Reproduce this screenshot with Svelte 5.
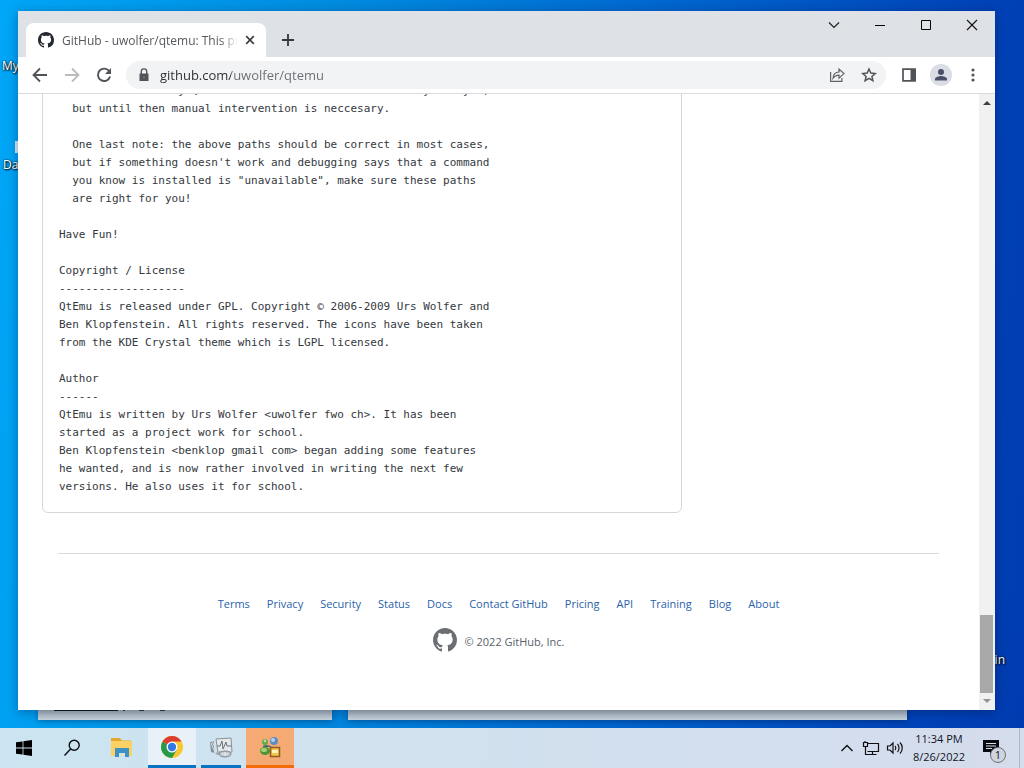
<script lang="ts">
    type Link = {
        label: string;
        href: string;
    };

    const readme = `  If you know where these programs are, set the paths to each
  of it. Eventually QtEmu will do all this automatically for you,
  but until then manual intervention is neccesary.

  One last note: the above paths should be correct in most cases,
  but if something doesn't work and debugging says that a command
  you know is installed is "unavailable", make sure these paths
  are right for you!

Have Fun!

Copyright / License
-------------------
QtEmu is released under GPL. Copyright © 2006-2009 Urs Wolfer and
Ben Klopfenstein. All rights reserved. The icons have been taken
from the KDE Crystal theme which is LGPL licensed.

Author
------
QtEmu is written by Urs Wolfer <uwolfer fwo ch>. It has been
started as a project work for school.
Ben Klopfenstein <benklop gmail com> began adding some features
he wanted, and is now rather involved in writing the next few
versions. He also uses it for school.`;

    const links: Link[] = [
        { label: "Terms", href: "#terms" },
        { label: "Privacy", href: "#privacy" },
        { label: "Security", href: "#security" },
        { label: "Status", href: "#status" },
        { label: "Docs", href: "#docs" },
        { label: "Contact GitHub", href: "#contact" },
        { label: "Pricing", href: "#pricing" },
        { label: "API", href: "#api" },
        { label: "Training", href: "#training" },
        { label: "Blog", href: "#blog" },
        { label: "About", href: "#about" },
    ];

    let url = $state("github.com/uwolfer/qtemu");
</script>

{#snippet mark(size: number)}
    <svg width={size} height={size} viewBox="0 0 16 16" fill="currentColor" aria-hidden="true">
        <path d="M8 0C3.58 0 0 3.58 0 8c0 3.54 2.29 6.53 5.47 7.59.4.07.55-.17.55-.38 0-.19-.01-.82-.01-1.49-2.01.37-2.53-.49-2.69-.94-.09-.23-.48-.94-.82-1.13-.28-.15-.68-.52-.01-.53.63-.01 1.08.58 1.23.82.72 1.21 1.87.87 2.33.66.07-.52.28-.87.51-1.07-1.78-.2-3.64-.89-3.64-3.95 0-.87.31-1.59.82-2.15-.08-.2-.36-1.02.08-2.12 0 0 .67-.21 2.2.82.64-.18 1.32-.27 2-.27s1.36.09 2 .27c1.53-1.04 2.2-.82 2.2-.82.44 1.1.16 1.92.08 2.12.51.56.82 1.27.82 2.15 0 3.07-1.87 3.75-3.65 3.95.29.25.54.73.54 1.48 0 1.07-.01 1.93-.01 2.2 0 .21.15.46.55.38A8.01 8.01 0 0 0 16 8c0-4.42-3.58-8-8-8z" />
    </svg>
{/snippet}

<div class="screen">
    <div class="desktop">
        <span class="shortcut my">My</span>
        <span class="file"></span>
        <span class="shortcut data">Dat</span>
        <span class="shortcut bin">in</span>

        <div class="behind first">
            <svg width="112" height="3" viewBox="0 0 112 3" aria-hidden="true">
                <path d="M0 0h64v1H0z" fill="#0c1c24" />
                <path d="M69 0h2v1h-2zM85 0h5v1h-5zM106 0h5v1h-5z" fill="#28404a" />
            </svg>
        </div>
        <div class="behind second"></div>

        <section class="window">
            <header class="tabs">
                <div class="tab">
                    <span class="favicon">{@render mark(16)}</span>
                    <span class="tab-title">GitHub - uwolfer/qtemu: This project</span>
                    <button aria-label="Close tab">
                        <svg width="16" height="16" viewBox="0 0 16 16">
                            <path d="M4.2 4.2l7.6 7.6M11.8 4.2l-7.6 7.6" stroke="#3c4043" stroke-width="1.7" />
                        </svg>
                    </button>
                </div>
                <button class="new-tab" aria-label="New tab">
                    <svg width="16" height="16" viewBox="0 0 16 16">
                        <path d="M8 2v12M2 8h12" stroke="#33373a" stroke-width="1.8" />
                    </svg>
                </button>
                <div class="controls">
                    <button aria-label="Search tabs">
                        <svg width="12" height="12" viewBox="0 0 12 12">
                            <path d="M1 3.5l5 5 5-5" fill="none" stroke="#222" stroke-width="1.2" />
                        </svg>
                    </button>
                    <button aria-label="Minimize">
                        <svg width="12" height="12" viewBox="0 0 12 12">
                            <path d="M1 6.5h10" stroke="#000" />
                        </svg>
                    </button>
                    <button aria-label="Maximize">
                        <svg width="12" height="12" viewBox="0 0 12 12">
                            <path d="M1.5 1.5h9v9h-9z" fill="none" stroke="#000" />
                        </svg>
                    </button>
                    <button aria-label="Close">
                        <svg width="12" height="12" viewBox="0 0 12 12">
                            <path d="M1 1l10 10M11 1L1 11" stroke="#111" stroke-width="1.1" />
                        </svg>
                    </button>
                </div>
            </header>

            <nav class="toolbar">
                <button aria-label="Back">
                    <svg width="18" height="18" viewBox="0 0 18 18" fill="none" stroke="#505458" stroke-width="1.8">
                        <path d="M16 9H3M9 2.5L2.5 9 9 15.5" />
                    </svg>
                </button>
                <button aria-label="Forward">
                    <svg width="18" height="18" viewBox="0 0 18 18" fill="none" stroke="#babcbe" stroke-width="1.8">
                        <path d="M2 9h13M9 2.5L15.5 9 9 15.5" />
                    </svg>
                </button>
                <button aria-label="Reload">
                    <svg width="18" height="18" viewBox="0 0 18 18" fill="none" stroke="#505458" stroke-width="1.9">
                        <path d="M14.4 5.5A6.2 6.2 0 1 0 15.1 10.5" />
                        <path d="M16 2v6h-6z" fill="#505458" stroke="none" />
                    </svg>
                </button>
                <div class="omnibox">
                    <svg width="16" height="16" viewBox="0 0 16 16" aria-hidden="true">
                        <path d="M3.5 6.5h9V14h-9z" fill="#505458" />
                        <path d="M5.3 7V4.6a2.7 2.7 0 0 1 5.4 0V7" fill="none" stroke="#505458" stroke-width="1.4" />
                        <circle cx="8" cy="10.2" r="1" fill="#777b7f" />
                    </svg>
                    <input type="text" aria-label="Address" bind:value={url} />
                    <button aria-label="Share this page">
                        <svg width="16" height="16" viewBox="0 0 16 16" fill="none" stroke="#5f6368" stroke-width="1.2">
                            <path d="M1.6 5v9.4h11.3V11" />
                            <path d="M4 11.2c.3-3.7 2.3-6 6-6.2V2l5 4.6-5 4.5V8.2C7.2 8.3 5.4 9.2 4 11.2z" />
                        </svg>
                    </button>
                    <button aria-label="Bookmark this tab">
                        <svg width="16" height="16" viewBox="0 0 16 16" fill="none" stroke="#505458" stroke-width="1.5">
                            <path d="M8 2l1.8 4.1 4.4.4-3.3 2.9 1 4.3L8 11.4l-3.9 2.3 1-4.3-3.3-2.9 4.4-.4z" />
                        </svg>
                    </button>
                </div>
                <button aria-label="Side panel">
                    <svg width="16" height="16" viewBox="0 0 16 16">
                        <path d="M2 2.2h12v11.6H2z" fill="none" stroke="#505458" stroke-width="1.7" />
                        <path d="M9.5 2H15v12H9.5z" fill="#505458" />
                    </svg>
                </button>
                <button aria-label="Profile">
                    <svg width="22" height="22" viewBox="0 0 22 22">
                        <circle cx="11" cy="11" r="11" fill="#dadce6" />
                        <circle cx="11" cy="8" r="3" fill="#4b5068" />
                        <path d="M5 16.5V15c0-2 4-3 6-3s6 1 6 3v1.5z" fill="#4b5068" />
                    </svg>
                </button>
                <button aria-label="Menu">
                    <svg width="16" height="16" viewBox="0 0 16 16" fill="#505458">
                        <circle cx="8" cy="3" r="1.6" />
                        <circle cx="8" cy="8" r="1.6" />
                        <circle cx="8" cy="13" r="1.6" />
                    </svg>
                </button>
            </nav>

            <div class="viewport">
                <!-- scrolled to the end, so the content sticks to the bottom edge -->
                <main class="page">
                    <article class="readme">
                        <pre>{readme}</pre>
                    </article>
                    <footer>
                        <ul>
                            {#each links as link}
                                <li><a href={link.href}>{link.label}</a></li>
                            {/each}
                        </ul>
                        <div class="copyright">
                            {@render mark(24)}
                            <span>© 2022 GitHub, Inc.</span>
                        </div>
                    </footer>
                </main>
                <div class="scrollbar">
                    <svg width="16" height="17" viewBox="0 0 16 17" aria-hidden="true">
                        <path d="M4 11h8L8 7z" fill="#404040" />
                    </svg>
                    <div class="track"><div class="thumb"></div></div>
                    <svg width="16" height="17" viewBox="0 0 16 17" aria-hidden="true">
                        <path d="M4 6h8l-4 4z" fill="#939393" />
                    </svg>
                </div>
            </div>
        </section>
    </div>

    <div class="taskbar">
        <button aria-label="Start">
            <svg width="16" height="16" viewBox="0 0 16 16">
                <path d="M0 2.3l6.6-.9v6.2H0zM7.4 1.3L16 0v7.6H7.4zM0 8.4h6.6v6.2L0 13.7zM7.4 8.4H16V16l-8.6-1.3z" />
            </svg>
        </button>
        <button aria-label="Search">
            <svg width="18" height="18" viewBox="0 0 18 18" fill="none" stroke="#0a0e12" stroke-width="1.4">
                <circle cx="11.2" cy="6.3" r="5" />
                <path d="M7.6 9.9L1.5 16.5" />
            </svg>
        </button>
        <button class="app" aria-label="File Explorer">
            <svg width="24" height="24" viewBox="0 0 24 24">
                <path d="M2 3h9l2 2.5h9V18H2z" fill="#e5a82e" />
                <path d="M2 6h21v15H2z" fill="#fcd164" />
                <path d="M6 13h14v9h-4v-4h-6v4H6z" fill="#3d91c7" />
                <path d="M10 18h6v3h-6z" fill="#d8e4d2" />
            </svg>
        </button>
        <button class="app active" aria-label="Google Chrome">
            <svg width="24" height="24" viewBox="0 0 24 24">
                <circle cx="12" cy="12" r="11" fill="#f9c82e" />
                <path d="M12 12L2.5 6.5A11 11 0 0 0 12 23l4.8-8.2z" fill="#27994a" />
                <path d="M12 12L2.5 6.5A11 11 0 0 1 21.5 6.5H12z" fill="#de3d32" />
                <circle cx="12" cy="12" r="5.5" fill="#fff" />
                <circle cx="12" cy="12" r="4.2" fill="#3478e5" />
            </svg>
        </button>
        <button class="app open" aria-label="System monitor">
            <svg width="24" height="24" viewBox="0 0 24 24">
                <path d="M7 4l15-1 1 14-14 1z" fill="#e6e9ea" stroke="#87919a" />
                <path d="M1 7l4-1v12l-3-1z" fill="#88929b" />
                <path d="M2 8l3 7M3 6l4 9" stroke="#d8dde1" />
                <path d="M8 11h3l2-5 1 8 3-7 1 4h4" fill="none" stroke="#65727d" />
                <path d="M6 18l5-2 3 3-6 1z" fill="#a6acb2" />
                <ellipse cx="16" cy="19" rx="6" ry="3" fill="#c3c8cd" stroke="#7d8891" />
                <path d="M13 19h6M16 17v4" stroke="#e9eced" />
            </svg>
        </button>
        <button class="app alert" aria-label="User accounts">
            <svg width="24" height="24" viewBox="0 0 24 24">
                <circle cx="7" cy="7" r="3" fill="#64a746" />
                <circle cx="7" cy="6" r="1.4" fill="#b5d89c" />
                <circle cx="16" cy="6" r="4" fill="#5c8cc4" />
                <circle cx="15" cy="5" r="2" fill="#b4d0ee" />
                <ellipse cx="7" cy="16" rx="5" ry="4" fill="#4c9638" />
                <ellipse cx="6" cy="15" rx="3" ry="2" fill="#a5cf76" />
                <path d="M5 11c3-2 6-1 9 1H5z" fill="#3c6c7c" />
                <path d="M12.500 12.500h9v9h-9z" fill="#f4c445" stroke="#8c5c24" stroke-width="1.5" />
                <path d="M14 15h6v3h-6z" fill="#fff3bb" />
            </svg>
        </button>

        <div class="tray">
            <button aria-label="Show hidden icons">
                <svg width="14" height="14" viewBox="0 0 14 14">
                    <path d="M1.5 10L7 4.5l5.500 5.500" fill="none" stroke="#111" stroke-width="1.4" />
                </svg>
            </button>
            <button aria-label="Network">
                <svg width="18" height="16" viewBox="0 0 18 16" fill="none" stroke="#111" stroke-width="1.2">
                    <path d="M5.5 3.5h11v8h-11M3.5 7v7.500h4M10.5 11.5v3M6.5 14.5h8" />
                    <path d="M1.5 2.5h4v4h-4z" />
                    <path d="M3 1v2" />
                </svg>
            </button>
            <button aria-label="Volume">
                <svg width="18" height="16" viewBox="0 0 18 16" fill="none" stroke="#111" stroke-width="1.2">
                    <path d="M1.5 6h2.500l3-3v10l-3-3H1.500z" />
                    <path d="M9 6c1 1 1 3 0 4M11.5 4c2 2 2 6 0 8M14 2.500c3 3 3 8 0 11" />
                </svg>
            </button>
            <button class="clock">
                <span>11:34 PM</span>
                <span>8/26/2022</span>
            </button>
            <button class="notices" aria-label="Notifications">
                <svg width="18" height="18" viewBox="0 0 18 18">
                    <path d="M1 1h16v12h-5l-4 4v-4H1z" fill="#080a10" />
                    <path d="M4 4.500h10M4 7h10M4 9.500h6" stroke="#d5dcec" stroke-width="1.2" />
                </svg>
                <span class="badge">1</span>
            </button>
            <button class="peek" aria-label="Show desktop"></button>
        </div>
    </div>
</div>

<style>
    :global(body) {
        margin: 0;
    }

    .screen {
        height: 100vh;
        display: flex;
        flex-direction: column;
        overflow: hidden;
        font-family: "Open Sans", "Noto Sans", sans-serif;
        font-size: 12px;
    }

    button {
        display: grid;
        place-content: center;
        padding: 0;
        border: none;
        background: none;
        color: inherit;
        font: inherit;
    }

    svg {
        display: block;
    }

    .desktop {
        flex: 1;
        position: relative;
        background: linear-gradient(95deg, #00a6f7 0%, #008de0 30%, #0068d0 60%, #0043b8 90%, #003cb0 100%);
    }

    /* desktop items */
    .shortcut {
        position: absolute;
        color: #fff;
        line-height: 16px;
        text-shadow: 1px 1px 2px #000, 0 0 2px #000;
    }

    .my {
        left: 2px;
        top: 58px;
    }

    .data {
        left: 3px;
        top: 157px;
    }

    .bin {
        right: 19px;
        bottom: 60px;
    }

    .file {
        position: absolute;
        left: 15px;
        top: 141px;
        width: 8px;
        height: 12px;
        background: #d5ecfa;
    }

    .behind {
        position: absolute;
        bottom: 8px;
        height: 10px;
        background: linear-gradient(#a8b4bc, #c6d4dd);
        box-shadow: 0 1px 6px rgba(0, 20, 60, 0.4);
    }

    .behind.first {
        left: 38px;
        width: 278px;
        padding-left: 16px;
    }

    .behind.second {
        left: 348px;
        right: 117px;
    }

    .window {
        position: absolute;
        inset: 11px 29px 18px 18px;
        display: flex;
        flex-direction: column;
        background: #fff;
        box-shadow: 0 2px 10px rgba(0, 10, 50, 0.35);
    }

    .tabs {
        display: flex;
        align-items: flex-end;
        height: 46px;
        padding-left: 8px;
        background: #dee1e6;
    }

    .tab {
        flex: 0 1 240px;
        box-sizing: border-box;
        display: flex;
        align-items: center;
        height: 34px;
        min-width: 0;
        padding: 0 8px 0 12px;
        border-radius: 8px 8px 0 0;
        background: #fff;
    }

    .favicon {
        color: #24292f;
    }

    .tab-title {
        flex: 1;
        min-width: 0;
        margin: 0 4px 0 8px;
        overflow: hidden;
        white-space: nowrap;
        color: #55585c;
        mask-image: linear-gradient(to right, #000 90%, transparent);
    }

    .new-tab {
        width: 28px;
        height: 34px;
        margin-left: 8px;
    }

    .controls {
        display: flex;
        align-self: flex-start;
        margin-left: auto;
    }

    .controls button {
        width: 46px;
        height: 28px;
    }

    .toolbar {
        display: flex;
        align-items: center;
        height: 36px;
        padding: 0 6px;
        border-bottom: 1px solid #d9dbde;
    }

    .toolbar button {
        width: 32px;
        height: 28px;
    }

    .omnibox {
        flex: 1;
        min-width: 0;
        display: flex;
        align-items: center;
        gap: 8px;
        height: 28px;
        margin: 0 7px 0 6px;
        padding: 0 1px 0 10px;
        border-radius: 14px;
        background: #f1f3f4;
    }

    .omnibox button {
        margin-left: -8px;
    }

    /* the host is darker than the path after it */
    .omnibox input {
        flex: 1;
        min-width: 0;
        padding: 0;
        border: none;
        outline: none;
        font: 13px / 20px "Open Sans", "Noto Sans", sans-serif;
        color: transparent;
        caret-color: #202124;
        background: linear-gradient(to right, #2b2d30 71px, #696d71 71px);
        background-clip: text;
    }

    .viewport {
        flex: 1;
        min-height: 0;
        display: flex;
    }

    .page {
        flex: 1;
        min-width: 0;
        display: flex;
        flex-direction: column;
        justify-content: flex-end;
        overflow: hidden;
    }

    .readme {
        margin: 0 297px 0 24px;
        padding: 16px;
        border: 1px solid #d4d7da;
        border-radius: 0 0 6px 6px;
    }

    pre {
        margin: 0;
        font: 11px / 18px "DejaVu Sans Mono", monospace;
        color: #34383d;
    }

    footer {
        margin: 40px 40px 0;
        padding: 41px 0 58px;
        border-top: 1px solid #d8dbde;
        font-size: 11px;
        line-height: 18px;
        color: #57606a;
    }

    ul {
        display: flex;
        justify-content: center;
        gap: 17px;
        margin: 0 0 15px;
        padding: 0;
        list-style: none;
        white-space: nowrap;
    }

    a {
        color: #2a62ab;
        text-decoration: none;
    }

    .copyright {
        display: flex;
        align-items: flex-end;
        justify-content: center;
        gap: 8px;
        line-height: 20px;
    }

    .copyright svg {
        color: #6b6e72;
    }

    .scrollbar {
        display: flex;
        flex-direction: column;
        width: 16px;
        background: #f1f1f1;
    }

    .track {
        flex: 1;
        display: flex;
        flex-direction: column;
        justify-content: flex-end;
        padding: 0 2px 0 1px;
    }

    .thumb {
        height: 78px;
        background: #a8a8a8;
    }

    .taskbar {
        display: flex;
        height: 40px;
        background: linear-gradient(to right, #cae5f1, #d1e2ee 35%, #d3dfef 70%, #d5dcec);
    }

    .taskbar > button {
        width: 48px;
    }

    .taskbar .app {
        box-sizing: border-box;
        border-bottom: 3px solid transparent;
    }

    .taskbar .app:not(.active) {
        width: 50px;
    }

    .taskbar .active {
        margin-left: 2px;
        border-bottom-color: #0a74c4;
        background: #e8f1f7;
    }

    .taskbar .open:not(.active) {
        width: 40px;
        margin: 0 5px;
        border-bottom-color: #0a74c4;
    }

    .taskbar .alert:not(.active) {
        width: 48px;
        border-bottom-color: #f36c0a;
        background: #f5aa74;
    }

    .tray {
        display: flex;
        margin-left: auto;
        color: #10141c;
    }

    .tray button {
        width: 24px;
    }

    .tray .clock {
        width: 64px;
        font-size: 11px;
        line-height: 18px;
        text-align: center;
    }

    .tray .notices {
        position: relative;
        width: 48px;
        padding-right: 8px;
    }

    .badge {
        position: absolute;
        left: 19px;
        top: 19px;
        box-sizing: border-box;
        width: 16px;
        height: 16px;
        border: 1px solid #6d7178;
        border-radius: 50%;
        background: #d0d4de;
        font-size: 11px;
        line-height: 14px;
        text-align: center;
    }

    .tray .peek {
        width: 5px;
        border-left: 1px solid #aeb9c8;
    }
</style>
